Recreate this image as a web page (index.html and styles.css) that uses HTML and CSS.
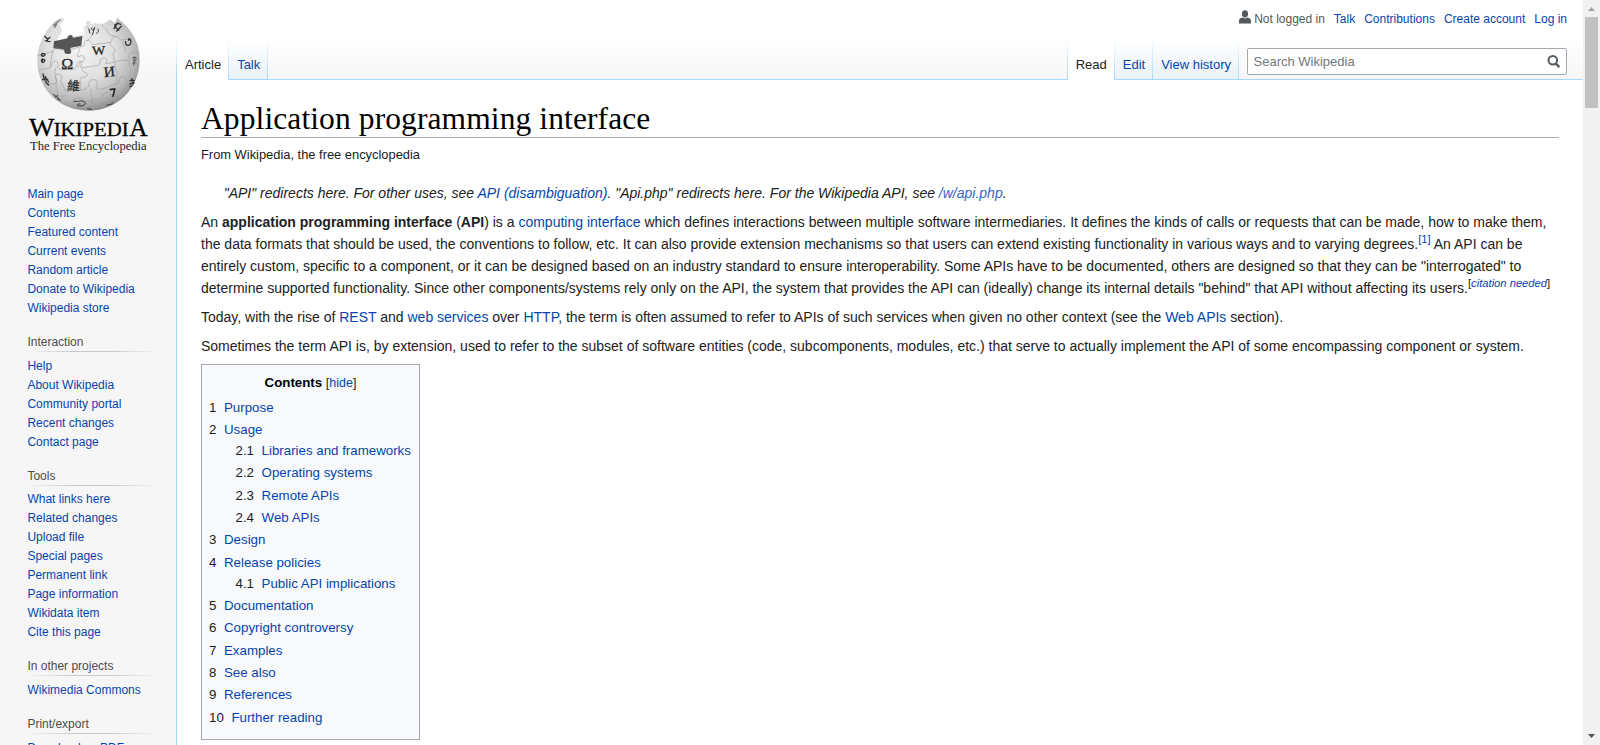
FILE: index.html
```html
<!DOCTYPE html>
<html lang="en">
<head>
<meta charset="utf-8">
<title>Application programming interface - Wikipedia</title>
<link rel="stylesheet" href="styles.css">
</head>
<body>
<div class="page">
  <aside class="panel">
    <a class="logo" href="#">
      <svg width="160" height="160" viewBox="24 0 480 480" font-family="Liberation Serif, serif">
        <defs>
          <radialGradient id="ball" cx="0.42" cy="0.35" r="0.68">
            <stop offset="0" stop-color="#f4f4f4"/>
            <stop offset="0.5" stop-color="#dedede"/>
            <stop offset="0.8" stop-color="#b8b8b8"/>
            <stop offset="1" stop-color="#858585"/>
          </radialGradient>
        </defs>
        <path d="M190 54 C180 56 160 62 158 72 C134 94 112 135 112 181 C112 268 178 332 265 332 C352 332 419 264 419 179 C419 130 397 92 366 66 L352 54 C347 58 351 65 344 67 C336 68 337 59 330 59 L309 72 C296 68 290 73 286 69 L272 72 C274 62 260 61 258 66 C256 72 262 74 258 79 L250 80 L254 102 L217 111 L216 103 L205 108 L207 115 L174 124 C170 112 184 107 185 94 C186 84 177 78 181 69 C184 66 193 68 190 54Z" fill="url(#ball)"/>
        <path d="M162 124 L202 115 C204 101 221 103 218 113 L247 108 L244 137 L213 143 C208 147 219 156 210 161 C198 163 191 161 193 150 C184 144 175 150 160 144Z" fill="#555"/>
        <g fill="none" stroke="#a0a0a0" stroke-width="2">
          <path d="M112 167 C128 158 145 162 158 153 C166 151 162 141 172 145 L191 151 M211 151 C228 144 238 139 248 140 C257 138 249 122 261 121 C277 120 270 137 282 134 C304 130 320 130 331 127 C340 122 330 113 345 109 C356 108 356 119 362 120 L398 115"/>
          <path d="M115 213 C130 204 144 207 151 203 C159 196 151 189 162 184 C174 180 179 195 172 201 C180 213 209 208 223 207 C234 203 223 197 234 187 C244 180 248 192 241 200 C249 207 278 196 295 197 C305 192 294 181 308 174 C321 171 322 185 317 190 C334 192 369 176 382 181 C392 175 382 162 397 158 L418 160"/>
          <path d="M131 258 C145 247 159 255 168 249 C176 239 158 231 171 223 C184 218 191 234 181 242 L197 273 C207 278 217 263 234 267 C248 274 263 266 267 255 C261 243 280 233 291 243 C296 255 284 259 291 268 C312 271 337 250 352 253 C362 246 353 231 369 228 C382 231 374 245 383 248 L404 242"/>
          <path d="M160 292 C174 284 187 294 199 285 M217 308 C225 291 245 290 253 301 C266 311 287 292 299 301 C312 293 304 280 320 277 C337 278 328 293 342 295 C350 297 366 286 379 280"/>
          <path d="M158 153 C155 178 148 195 151 203 M235 143 C245 154 225 163 234 171 C250 160 260 174 248 185 C238 182 238 197 233 203 M168 203 C158 220 173 239 168 249 C166 267 178 273 171 290 M247 203 C241 217 260 215 263 225 C255 237 238 225 240 243 C247 251 237 259 241 268 M331 127 C326 140 349 142 344 155 C332 164 346 174 342 187 M370 120 C362 137 380 139 376 154 M346 187 C340 209 357 215 350 230 C354 243 351 250 345 255 M274 269 C267 286 281 289 273 301 C281 309 271 318 281 329 M216 302 C224 316 216 323 213 324 M388 180 C383 198 398 210 387 226"/>
          <path d="M258 79 C275 83 259 97 278 104 C270 112 271 119 262 121 M307 73 C304 83 324 84 324 96 C326 107 339 106 345 109"/>
        </g>
        <g fill="#252525" stroke="#252525" stroke-width="0.8">
          <text x="277" y="165" font-size="38" transform="rotate(-3 277 165)" textLength="40" lengthAdjust="spacingAndGlyphs">W</text>
          <text x="184" y="206" font-size="45" textLength="36" lengthAdjust="spacingAndGlyphs">Ω</text>
          <text x="313" y="232" font-size="44" textLength="34" lengthAdjust="spacingAndGlyphs" transform="rotate(-6 313 232)">И</text>
          <text x="201" y="270" font-size="38" font-family="Noto Sans CJK TC, sans-serif" transform="rotate(4 201 270)">維</text>
        </g>
        <path d="M329 269 L344 267 L342 278 L338 290" fill="none" stroke="#252525" stroke-width="5"/>
        <g fill="none" stroke="#353535" stroke-width="4" stroke-linecap="round">
          <path d="M134 109 L143 118 L150 112 M143 118 L142 124 M136 122 L150 125"/>
          <path d="M128 160 C121 165 127 173 134 166 C140 160 124 158 124 166 M127 177 C120 184 129 192 134 183 C137 175 126 177 126 186"/>
          <path d="M129 222 L133 240 M136 229 L138 244 M127 239 C136 232 143 234 145 246 M137 247 L146 255"/>
          <path d="M267 87 L269 98 M276 83 C268 90 285 94 284 83 M283 84 L278 103 M293 87 C298 91 295 98 290 100" stroke-width="3"/>
          <path d="M344 79 L356 91 M342 86 L352 70 M350 93 L364 79 M352 69 L362 73 M344 75 L354 70"/>
          <path d="M377 125 C373 137 391 142 393 126 C393 115 383 113 386 121"/>
          <path d="M398 173 L408 172 M399 180 C403 187 409 183 408 175 M398 190 L408 188 M403 170 L401 196" stroke-width="2"/>
          <path d="M390 242 L403 241 M395 236 L401 252 M390 252 L402 248 M390 260 L397 257"/>
          <path d="M222 303 C232 309 240 299 249 304 C263 308 253 319 239 318 C228 319 231 310 240 312" stroke-width="3"/>
          <path d="M160 283 L177 296 M166 291 L172 287 M172 297 L182 301 M320 316 C326 309 332 320 338 308 M263 326 L275 328" stroke-width="3"/>
          <path d="M160 76 C167 73 169 66 180 60 M164 82 L170 72" stroke="#777"/>
        </g>
        <g fill="#000" stroke="#000" stroke-width="0.8">
          <text x="87" y="407" font-size="73" textLength="76" lengthAdjust="spacingAndGlyphs">W</text>
          <text x="161" y="407" font-size="56" textLength="225" lengthAdjust="spacingAndGlyphs">IKIPEDI</text>
          <text x="388" y="407" font-size="73" textLength="55" lengthAdjust="spacingAndGlyphs">A</text>
          <text x="90" y="450" font-size="40" fill="#222" stroke="none" textLength="350" lengthAdjust="spacingAndGlyphs">The Free Encyclopedia</text>
        </g>
      </svg>
    </a>
    <nav class="portal first">
      <ul>
        <li><a href="#">Main page</a></li><li><a href="#">Contents</a></li><li><a href="#">Featured content</a></li><li><a href="#">Current events</a></li><li><a href="#">Random article</a></li><li><a href="#">Donate to Wikipedia</a></li><li><a href="#">Wikipedia store</a></li>
      </ul>
    </nav>
    <nav class="portal">
      <h3>Interaction</h3>
      <ul>
        <li><a href="#">Help</a></li><li><a href="#">About Wikipedia</a></li><li><a href="#">Community portal</a></li><li><a href="#">Recent changes</a></li><li><a href="#">Contact page</a></li>
      </ul>
    </nav>
    <nav class="portal">
      <h3>Tools</h3>
      <ul>
        <li><a href="#">What links here</a></li><li><a href="#">Related changes</a></li><li><a href="#">Upload file</a></li><li><a href="#">Special pages</a></li><li><a href="#">Permanent link</a></li><li><a href="#">Page information</a></li><li><a href="#">Wikidata item</a></li><li><a href="#">Cite this page</a></li>
      </ul>
    </nav>
    <nav class="portal">
      <h3>In other projects</h3>
      <ul><li><a href="#">Wikimedia Commons</a></li></ul>
    </nav>
    <nav class="portal">
      <h3>Print/export</h3>
      <ul><li><a href="#">Download as PDF</a></li></ul>
    </nav>
  </aside>

  <div class="column">
    <header class="head">
      <div class="personal">
        <span class="user"><svg width="12" height="14" viewBox="0 0 12 14"><ellipse cx="6" cy="3.8" rx="3.1" ry="3.6" fill="#54595d"/><path d="M0 13.6V11C0 8.9 1.6 8 3.3 7.6 4.8 8.7 7.2 8.7 8.7 7.6 10.4 8 12 8.9 12 11v2.6z" fill="#54595d"/></svg>Not logged in</span>
        <a href="#">Talk</a><a href="#">Contributions</a><a href="#">Create account</a><a href="#">Log in</a>
      </div>
      <div class="bar">
        <ul class="tabs">
          <li class="selected"><a href="#">Article</a></li><li><a href="#">Talk</a></li>
        </ul>
        <ul class="tabs views">
          <li class="selected"><a href="#">Read</a></li><li><a href="#">Edit</a></li><li><a href="#">View history</a></li>
        </ul>
        <form class="search">
          <span>Search Wikipedia</span>
          <svg width="13" height="13" viewBox="0 0 13 13" fill="none" stroke="#54595d"><circle cx="5.8" cy="5.3" r="4.3" stroke-width="2"/><path d="M8.7 8.4l3.6 3.8" stroke-width="2.4"/></svg>
        </form>
      </div>
    </header>
    <main class="content">
      <h1>Application programming interface</h1>
      <div class="tagline">From Wikipedia, the free encyclopedia</div>
      <div class="hatnote">"API" redirects here. For other uses, see <a href="#">API (disambiguation)</a>. "Api.php" redirects here. For the Wikipedia API, see <a class="ext" href="#">/w/api.php</a>.</div>
      <p>An <b>application programming interface</b> (<b>API</b>) is a <a href="#">computing interface</a> which defines interactions between multiple software intermediaries. It defines the kinds of calls or requests that can be made, how to make them, the data formats that should be used, the conventions to follow, etc. It can also provide extension mechanisms so that users can extend existing functionality in various ways and to varying degrees.<sup><a href="#">[1]</a></sup> An API can be entirely custom, specific to a component, or it can be designed based on an industry standard to ensure interoperability. Some APIs have to be documented, others are designed so that they can be "interrogated" to determine supported functionality. Since other components/systems rely only on the API, the system that provides the API can (ideally) change its internal details "behind" that API without affecting its users.<sup class="needed">[<i><a href="#">citation needed</a></i>]</sup></p>
      <p>Today, with the rise of <a href="#">REST</a> and <a href="#">web services</a> over <a href="#">HTTP</a>, the term is often assumed to refer to APIs of such services when given no other context (see the <a href="#">Web APIs</a> section).</p>
      <p>Sometimes the term API is, by extension, used to refer to the subset of software entities (code, subcomponents, modules, etc.) that serve to actually implement the API of some encompassing component or system.</p>
      <div class="toc">
        <div class="toctitle"><h2>Contents</h2> <span>[<a href="#">hide</a>]</span></div>
        <ul>
          <li><a href="#"><span>1</span>Purpose</a></li>
          <li><a href="#"><span>2</span>Usage</a>
            <ul>
              <li><a href="#"><span>2.1</span>Libraries and frameworks</a></li>
              <li><a href="#"><span>2.2</span>Operating systems</a></li>
              <li><a href="#"><span>2.3</span>Remote APIs</a></li>
              <li><a href="#"><span>2.4</span>Web APIs</a></li>
            </ul>
          </li>
          <li><a href="#"><span>3</span>Design</a></li>
          <li><a href="#"><span>4</span>Release policies</a>
            <ul><li><a href="#"><span>4.1</span>Public API implications</a></li></ul>
          </li>
          <li><a href="#"><span>5</span>Documentation</a></li>
          <li><a href="#"><span>6</span>Copyright controversy</a></li>
          <li><a href="#"><span>7</span>Examples</a></li>
          <li><a href="#"><span>8</span>See also</a></li>
          <li><a href="#"><span>9</span>References</a></li>
          <li><a href="#"><span>10</span>Further reading</a></li>
        </ul>
      </div>
    </main>
  </div>

  <div class="scrollbar">
    <svg width="17" height="17" viewBox="0 0 17 17"><path d="M5 11h7L8.5 7z" fill="#a3a3a3"/></svg>
    <div class="thumb"></div>
    <svg width="17" height="17" viewBox="0 0 17 17"><path d="M5 6h7L8.5 10z" fill="#505050"/></svg>
  </div>
</div>
</body>
</html>
```

FILE: styles.css
```css
* { box-sizing: border-box; }
body { margin: 0; background: #f6f6f6; font-family: "Liberation Sans", Arial, sans-serif; color: #202122; overflow: hidden; }
a { color: #0645ad; text-decoration: none; }
ul { list-style: none; margin: 0; padding: 0; }
.page { display: flex; height: 745px; overflow: hidden; }

/* Sidebar */
.panel { flex: 0 0 176px; padding-left: 8px; background: linear-gradient(#fff 0, #fff 40px, #f6f6f6 80px); }
.logo { display: block; height: 160px; width: 160px; }
.logo svg { display: block; }
.portal { margin: 0 18px 0 19.4px; padding: 4px 0 3px; font-size: 12px; }
.portal.first { padding-top: 25px; }
.portal h3 { margin: 8px 0 0; padding: 3px 0; height: 19px; line-height: 13px; font-size: 12px; font-weight: normal; color: #4d4d4d; background: linear-gradient(to right, rgba(200,204,209,0) 0, #c8ccd1 33%, #c8ccd1 66%, rgba(200,204,209,0) 100%) left bottom / 100% 1px no-repeat; }
.portal h3 + ul { padding-top: 4.67px; }
.portal li { height: 19px; line-height: 13px; padding: 3px 0; white-space: nowrap; }

/* Header */
.column { flex: 1; min-width: 0; display: flex; flex-direction: column; }
.head { height: 79px; background: linear-gradient(#fff 50%, #f6f6f6 100%); }
.personal { height: 39px; padding: 11px 16px 0 0; display: flex; justify-content: flex-end; gap: 9px; font-size: 12px; line-height: 16px; }
.user { color: #54595d; display: flex; gap: 3px; }
.user svg { margin-top: -1px; }
.bar { height: 40px; display: flex; padding-right: 16px; }
.tabs { display: flex; height: 40px; font-size: 13px; }
.tabs li { height: 40px; padding: 18px 7px 0 8px; line-height: 16px; white-space: nowrap; border-right: 1px solid; border-image: linear-gradient(#fff, #a7d7f9) 1; background: linear-gradient(#fff, #e8f2f8); }
.tabs:first-child { border-left: 1px solid; border-image: linear-gradient(#fff, #a7d7f9) 1; }
.tabs .selected { background: #fff; height: 41px; position: relative; }
.tabs .selected a { color: #202122; }
.views { margin-left: auto; border-left: 1px solid; border-image: linear-gradient(#fff, #a7d7f9) 1; }
.search { width: 320px; height: 27px; margin: 9px 0 0 8px; padding: 0 6px 0 5.5px; display: flex; align-items: center; justify-content: space-between; border: 1px solid #a2a9b1; border-radius: 2px; background: #fff; font-size: 13px; color: #72777d; }

/* Article */
.content { flex: 1; padding: 20px 24px 0; background: #fff; border: 1px solid #a7d7f9; border-width: 1px 0 0 1px; font-size: 14px; line-height: 22px; }
h1 { margin: 0; height: 38px; border-bottom: 1px solid #a2a9b1; font: 31.5px/37px "Liberation Serif", serif; letter-spacing: 0.1px; color: #000; }
.tagline { margin-top: 6px; font-size: 12.88px; line-height: 21px; }
.hatnote { margin: 17px 0 7px; padding-left: 22.7px; font-style: italic; }
.ext { color: #36b; }
p { margin: 7px 0; }
sup { font-size: 11.2px; line-height: 0; }
.toc { width: 219px; height: 376px; padding: 7px; border: 1px solid #a2a9b1; background: #f8f9fa; font-size: 13.3px; line-height: 21px; }
.toctitle { text-align: center; }
.toctitle h2 { display: inline; font-size: 13.3px; color: #000; }
.toctitle span { font-size: 12.5px; }
.toc ul { margin-top: 2.7px; }
.toc li { margin-bottom: 1.33px; white-space: nowrap; }
.toc ul ul { margin: 0 0 0 26.5px; }
.toc li span { color: #202122; padding-right: 7.6px; }

/* Window scrollbar */
.scrollbar { flex: 0 0 17px; background: #f1f1f1; display: flex; flex-direction: column; }
.thumb { width: 13px; height: 91px; margin: 0 2px auto; background: #c1c1c1; }
```
